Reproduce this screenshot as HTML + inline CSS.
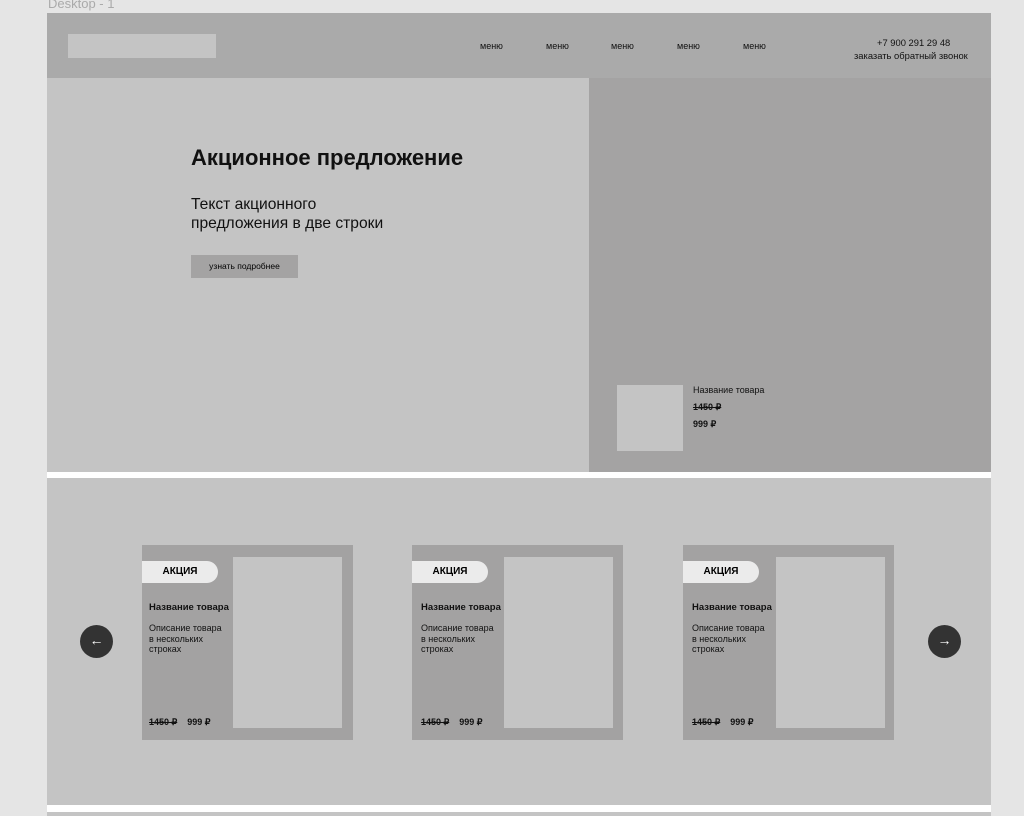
<!DOCTYPE html><html><head><meta charset="utf-8"><style>
body{margin:0;width:1024px;height:816px;background:#e5e5e5;position:relative;overflow:hidden;font-family:"Liberation Sans",sans-serif;}
div,span{position:absolute;}
.t{color:#111;white-space:nowrap}
.card{width:211px;height:195px;background:#a3a2a2}
.img{left:91px;top:12px;width:109px;height:171px;background:#c4c4c4}
.badge{left:0;top:16px;width:76px;height:22px;background:#ebebeb;border-radius:0 11px 11px 0;font-size:10px;font-weight:bold;text-align:center;line-height:22px}
.nm{left:7px;top:57px;font-size:9.5px;font-weight:bold}
.ds{left:7px;top:78px;font-size:9px;line-height:10.5px;white-space:normal;width:74px}
.pr{left:7px;top:172px;font-size:9px;font-weight:bold}
.circ{width:33px;height:33px;border-radius:50%;background:#333;color:#fff;text-align:center;line-height:31px;font-size:14px}
</style></head><body>
<span class="t" style="left:48px;top:-4px;color:#aaa;font-size:13px">Desktop - 1</span>
<div style="left:47px;top:13px;width:944px;height:65px;background:#aaa"></div>
<div style="left:68px;top:34px;width:148px;height:24px;background:#c4c4c4"></div>
<span class="t" style="left:480px;top:41px;font-size:9px">меню</span>
<span class="t" style="left:546px;top:41px;font-size:9px">меню</span>
<span class="t" style="left:611px;top:41px;font-size:9px">меню</span>
<span class="t" style="left:677px;top:41px;font-size:9px">меню</span>
<span class="t" style="left:743px;top:41px;font-size:9px">меню</span>
<span class="t" style="left:877px;top:37px;font-size:9.4px">+7 900 291 29 48</span>
<span class="t" style="left:854px;top:50px;font-size:9.4px">заказать обратный звонок</span>
<div style="left:47px;top:78px;width:542px;height:394px;background:#c4c4c4"></div>
<div style="left:589px;top:78px;width:402px;height:394px;background:#a4a3a3"></div>
<span class="t" style="left:191px;top:145px;font-size:22px;font-weight:bold">Акционное предложение</span>
<span class="t" style="left:191px;top:195px;font-size:15.6px;line-height:19px">Текст акционного<br>предложения в две строки</span>
<div style="left:191px;top:255px;width:107px;height:23px;background:#a4a3a3;font-size:8.5px;text-align:center;line-height:23px">узнать подробнее</div>
<div style="left:617px;top:385px;width:66px;height:66px;background:#c4c4c4"></div>
<span class="t" style="left:693px;top:385px;font-size:9px">Название товара</span>
<span class="t" style="left:693px;top:402px;font-size:9px;font-weight:bold;text-decoration:line-through">1450 ₽</span>
<span class="t" style="left:693px;top:419px;font-size:9px;font-weight:bold">999 ₽</span>
<div style="left:47px;top:472px;width:944px;height:6px;background:#fff"></div>
<div style="left:47px;top:478px;width:944px;height:327px;background:#c4c4c4"></div>
<div style="left:47px;top:805px;width:944px;height:7px;background:#fff"></div>
<div style="left:47px;top:812px;width:944px;height:4px;background:#c4c4c4"></div>
<div class="circ" style="left:80px;top:625px">←</div>
<div class="circ" style="left:928px;top:625px">→</div>
<div class="card" style="left:142px;top:545px"><div class="img"></div><div class="badge">АКЦИЯ</div><span class="t nm">Название товара</span><span class="t ds">Описание товара в нескольких строках</span><span class="t pr"><s>1450 ₽</s>&nbsp;&nbsp;&nbsp; 999 ₽</span></div>
<div class="card" style="left:412px;top:545px"><div class="img" style="left:92px"></div><div class="badge">АКЦИЯ</div><span class="t nm" style="left:9px">Название товара</span><span class="t ds" style="left:9px">Описание товара в нескольких строках</span><span class="t pr" style="left:9px"><s>1450 ₽</s>&nbsp;&nbsp;&nbsp; 999 ₽</span></div>
<div class="card" style="left:683px;top:545px"><div class="img" style="left:93px"></div><div class="badge">АКЦИЯ</div><span class="t nm" style="left:9px">Название товара</span><span class="t ds" style="left:9px">Описание товара в нескольких строках</span><span class="t pr" style="left:9px"><s>1450 ₽</s>&nbsp;&nbsp;&nbsp; 999 ₽</span></div>
</body></html>
